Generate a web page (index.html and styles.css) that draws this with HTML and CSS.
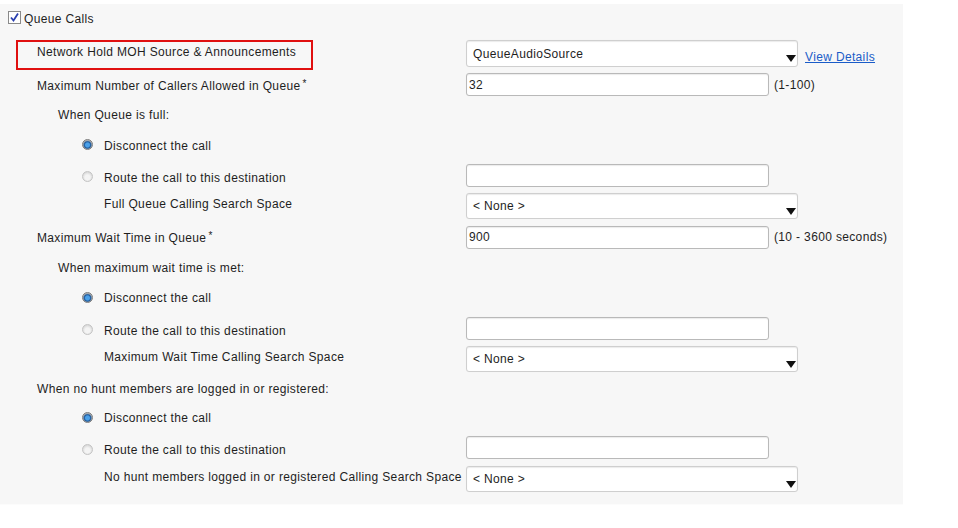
FILE: index.html
```html
<!DOCTYPE html>
<html>
<head>
<meta charset="utf-8">
<link rel="stylesheet" href="styles.css">
</head>
<body>
<div class="panel">
  <div class="row h30">
    <div class="label l0">
      <span class="checkbox"><svg viewBox="0 0 13 13" width="13" height="13"><rect x="0.5" y="0.5" width="12" height="12" fill="#fff" stroke="#8a8a8a"/><path d="M3 6.5 L5.5 9.5 L10 2.5" fill="none" stroke="#2a3fb0" stroke-width="1.8"/></svg></span>
      <span>Queue Calls</span>
    </div>
  </div>
  <div class="row h36">
    <div class="label l0 boxed-cell"><span class="redbox">Network Hold MOH Source &amp; Announcements</span></div>
    <div class="select wide tall"><span>QueueAudioSource</span><i class="arrow"></i></div>
    <a class="link" href="#">View Details</a>
  </div>
  <div class="row h29">
    <div class="label l1 dn1">Maximum Number of Callers Allowed in Queue<sup>*</sup></div>
    <div class="input"><span>32</span></div>
    <span class="hint">(1-100)</span>
  </div>
  <div class="row h30">
    <div class="label l2 dn1">When Queue is full:</div>
  </div>
  <div class="row h31">
    <div class="label l3 dn1"><span class="radio on"></span>Disconnect the call</div>
  </div>
  <div class="row h30">
    <div class="label l3 dn"><span class="radio"></span>Route the call to this destination</div>
    <div class="input"></div>
  </div>
  <div class="row h31">
    <div class="label l4 up">Full Queue Calling Search Space</div>
    <div class="select wide"><span>&lt; None &gt;</span><i class="arrow"></i></div>
  </div>
  <div class="row h32">
    <div class="label l1 dn1">Maximum Wait Time in Queue<sup>*</sup></div>
    <div class="input"><span>900</span></div>
    <span class="hint">(10 - 3600 seconds)</span>
  </div>
  <div class="row h29">
    <div class="label l2">When maximum wait time is met:</div>
  </div>
  <div class="row h30">
    <div class="label l3 dn1"><span class="radio on"></span>Disconnect the call</div>
  </div>
  <div class="row h32">
    <div class="label l3 dn"><span class="radio"></span>Route the call to this destination</div>
    <div class="input"></div>
  </div>
  <div class="row h29">
    <div class="label l4 up">Maximum Wait Time Calling Search Space</div>
    <div class="select wide"><span>&lt; None &gt;</span><i class="arrow"></i></div>
  </div>
  <div class="row h29">
    <div class="label l1 dn1">When no hunt members are logged in or registered:</div>
  </div>
  <div class="row h30">
    <div class="label l3 dn1"><span class="radio on"></span>Disconnect the call</div>
  </div>
  <div class="row h31">
    <div class="label l3 dn"><span class="radio"></span>Route the call to this destination</div>
    <div class="input"></div>
  </div>
  <div class="row h32">
    <div class="label l4 up">No hunt members logged in or registered Calling Search Space</div>
    <div class="select wide"><span>&lt; None &gt;</span><i class="arrow"></i></div>
  </div>
</div>
</body>
</html>
```

FILE: styles.css
```css
html, body {
  margin: 0;
  padding: 0;
  background: #ffffff;
}
body {
  font-family: "Liberation Sans", Arial, sans-serif;
  font-size: 12px;
  letter-spacing: 0.35px;
  color: #1e1e1e;
}
.panel {
  margin-top: 4px;
  width: 903px;
  background: #f7f7f7;
  padding-bottom: 9px;
  border-bottom: 1px solid #fcfcfc;
}
.row {
  display: flex;
  align-items: center;
}
.h29 { height: 29px; }
.h30 { height: 30px; }
.h31 { height: 31px; }
.h32 { height: 32px; }
.h36 { height: 36px; }

.label {
  width: 466px;
  flex: none;
  box-sizing: border-box;
  display: flex;
  align-items: center;
  white-space: nowrap;
}
.l0 { padding-left: 8px; }
.l1 { padding-left: 37px; }
.l2 { padding-left: 58px; }
.l3 { padding-left: 82px; }
.l4 { padding-left: 104px; }
.dn { padding-top: 5px; }
.dn1 { padding-top: 2px; }
.up { padding-bottom: 4px; }

.label sup {
  font-size: 10px;
  position: relative;
  top: -2px;
  margin-left: 2px;
  vertical-align: top;
  line-height: 1;
}

.checkbox {
  width: 13px;
  height: 13px;
  margin-right: 3px;
  position: relative;
  top: -2px;
}
.checkbox svg { display: block; }

.boxed-cell {
  padding-left: 16px;
  align-self: flex-end;
}
.redbox {
  box-sizing: border-box;
  width: 297px;
  height: 30px;
  border: 2px solid #e01010;
  padding-left: 19px;
  padding-bottom: 7px;
  display: flex;
  align-items: center;
}

.radio {
  width: 11px;
  height: 11px;
  border-radius: 50%;
  box-sizing: border-box;
  border: 1px solid #c4c4c4;
  background: radial-gradient(circle at 50% 60%, #f4f4f4 0 35%, #d8d8d8 75%);
  margin-right: 11px;
  position: relative;
  top: -1px;
}
.radio.on {
  border-color: #7d7d7d;
  background: radial-gradient(circle at 50% 55%, #4aa0e8 0 30%, #1e5a9c 48%, #b8b8b8 70%);
}

.input, .select {
  box-sizing: border-box;
  background: #fff;
  border: 1px solid #b9b9b9;
  border-radius: 3px;
  box-shadow: inset 0 1px 1px rgba(0,0,0,0.08), 0 0 1px rgba(0,0,0,0.05);
  display: flex;
  align-items: center;
  padding-left: 6px;
  flex: none;
}
.input {
  width: 303px;
  height: 23px;
  padding-left: 2px;
}
.select {
  width: 332px;
  height: 26px;
  position: relative;
  border-color: #cfcfcf;
  padding-left: 6px;
}
.select.tall {
  height: 27px;
  align-self: flex-end;
  margin-bottom: 3px;
}
.arrow {
  position: absolute;
  right: 1px;
  bottom: 3px;
  width: 0;
  height: 0;
  border-left: 5px solid transparent;
  border-right: 5px solid transparent;
  border-top: 7px solid #111;
}
.select.tall .arrow { bottom: 4px; }

.hint {
  margin-left: 5px;
  white-space: nowrap;
}
.link {
  color: #1a5cc8;
  text-decoration: underline;
  margin-left: 7px;
  position: relative;
  top: 5px;
  align-self: center;
}
```
